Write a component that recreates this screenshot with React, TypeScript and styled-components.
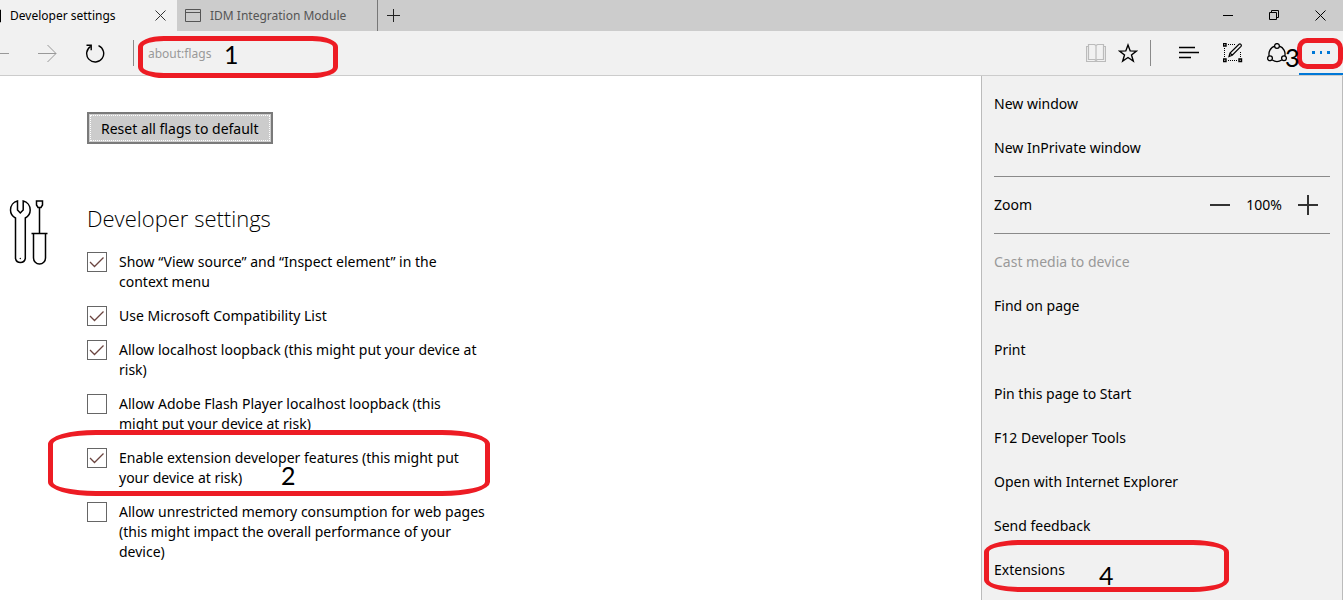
import React from 'react';
import styled, { createGlobalStyle } from 'styled-components';

const GlobalStyle = createGlobalStyle`
  * { box-sizing: border-box; }
  body {
    margin: 0;
    background: #fff;
    color: #000;
    font: 14px/20px "Segoe UI", "Noto Sans", "Open Sans", sans-serif;
  }
  button, input { font: inherit; color: inherit; }
  svg { display: block; flex: none; }
`;

const Window = styled.div`
  min-height: 100vh;
  display: flex;
  flex-direction: column;
  overflow: hidden;
`;

const TitleBar = styled.header`
  display: flex;
  height: 31px;
  background: #ccc;
  font-size: 12px;
`;

const Tab = styled.div<{ $active?: boolean; $width: number }>`
  display: flex;
  align-items: center;
  gap: 8px;
  width: ${p => p.$width}px;
  padding-right: ${p => (p.$active ? 11 : 8)}px;
  padding-left: ${p => (p.$active ? 0 : 8)}px;
  background: ${p => (p.$active ? '#f1f1f1' : '#ccc')};
  color: ${p => (p.$active ? '#000' : '#555')};
  border-right: ${p => (p.$active ? 'none' : '1px solid #777')};
  white-space: nowrap;
`;

const TabTitle = styled.span`
  flex: 1;
`;

const IconButton = styled.button<{ $width?: number }>`
  display: flex;
  align-items: center;
  justify-content: center;
  flex: none;
  width: ${p => (p.$width ? p.$width + 'px' : 'auto')};
  align-self: stretch;
  padding: 0;
  border: 0;
  background: none;
`;

const WindowControls = styled.div`
  display: flex;
  margin-left: auto;
`;

const Toolbar = styled.nav`
  display: flex;
  align-items: center;
  height: 45px;
  background: #f1f1f1;
  border-bottom: 1px solid #ccc;
`;

const Navigation = styled.div`
  display: flex;
  align-self: stretch;
  gap: 28px;
  margin-right: 28px;
`;

const Divider = styled.span`
  width: 1px;
  height: 26px;
  background: #8a8a8a;
`;

const AddressBar = styled.div`
  position: relative;
  flex: 1;
  display: flex;
  align-items: center;
  align-self: stretch;
`;

const AddressInput = styled.input`
  width: 100%;
  padding: 2px 14px 0;
  border: 0;
  outline: 0;
  background: none;
  color: #999;
  font-size: 12px;
`;

const PageTools = styled.div`
  display: flex;
  align-items: center;
  align-self: stretch;
  margin-right: 6px;
`;

const BrowserTools = styled.div`
  display: flex;
  align-self: stretch;
  margin-left: 16px;
`;

const MoreTool = styled.div`
  position: relative;
  display: flex;
  border-bottom: 2px solid #0078d7;
`;

const Callout = styled.span<{ $inset: string; $radius: string }>`
  position: absolute;
  inset: ${p => p.$inset};
  z-index: 2;
  border: 5px solid #ed1c24;
  border-radius: ${p => p.$radius};
  pointer-events: none;
`;

const AddressCallout = styled(Callout)`
  width: 200px;
`;

const CalloutNumber = styled.span<{ $left: number; $top: number }>`
  position: absolute;
  left: ${p => p.$left}px;
  top: ${p => p.$top}px;
  z-index: 3;
  color: #000;
  font: 25px/24px Lato, sans-serif;
  pointer-events: none;
`;

const Body = styled.div`
  flex: 1;
  display: flex;
`;

const Page = styled.main`
  flex: 1;
  padding-top: 36px;
`;

const Section = styled.section`
  display: grid;
  grid-template-columns: 78px 1fr;
  padding-left: 9px;
  margin-bottom: 56px;
`;

const SectionContent = styled.div`
  grid-column: 2;
`;

const ResetButton = styled.button`
  height: 32px;
  padding: 1px 12px 0;
  border: 2px solid #7a7a7a;
  background: #ccc;
  outline: 1px dotted #fff;
  outline-offset: -4px;
  white-space: nowrap;
`;

const Heading = styled.h1`
  margin: 0 0 16px;
  font-size: 22px;
  line-height: 36px;
  font-weight: 300;
  font-family: "Open Sans", "Noto Sans", sans-serif;
`;

const FlagList = styled.ul`
  display: flex;
  flex-direction: column;
  gap: 14px;
  margin: 0;
  padding: 0;
  list-style: none;
`;

const FlagItem = styled.li`
  position: relative;
  max-width: 402px;
`;

const FlagLabel = styled.label`
  display: flex;
  gap: 12px;
`;

const CheckSlot = styled.span`
  display: grid;
  flex: none;
  width: 20px;
  height: 20px;
  > * { grid-area: 1 / 1; }
  > svg { pointer-events: none; visibility: hidden; }
  > input:checked + svg { visibility: visible; }
`;

const Checkbox = styled.input`
  appearance: none;
  width: 20px;
  height: 20px;
  margin: 0;
  border: 1px solid #666;
  background: #fff;
`;

const Menu = styled.aside`
  flex: none;
  width: 362px;
  padding: 6px 12px 0;
  background: #f1f1f1;
  border: solid #bbb;
  border-width: 0 1px;
`;

const MenuEntry = styled.div`
  position: relative;
`;

const MenuItem = styled.button`
  display: block;
  width: 100%;
  height: 44px;
  padding: 0;
  border: 0;
  background: none;
  text-align: left;
  &:disabled { color: #999; }
`;

const Separator = styled.hr`
  height: 1px;
  margin: 6px 0;
  border: 0;
  background: #8a8a8a;
`;

const ZoomRow = styled.div`
  display: flex;
  align-items: center;
  height: 44px;
`;

const ZoomControls = styled.div`
  display: flex;
  align-items: center;
  align-self: stretch;
  margin-left: auto;
`;

const ZoomValue = styled.output`
  width: 44px;
  text-align: center;
`;

type GlyphProps = { w?: number; h?: number; color?: string; sw?: number; children: React.ReactNode };

const Glyph = ({ w = 20, h = 20, color = '#000', sw = 1, children }: GlyphProps) => (
  <svg width={w} height={h} viewBox={`0 0 ${w} ${h}`} fill="none" stroke={color} strokeWidth={sw} aria-hidden="true">
    {children}
  </svg>
);

const flags = [
  { text: 'Show “View source” and “Inspect element” in the context menu', on: true },
  { text: 'Use Microsoft Compatibility List', on: true },
  { text: 'Allow localhost loopback (this might put your device at risk)', on: true },
  { text: 'Allow Adobe Flash Player localhost loopback (this might\u00a0put your device at risk)', on: false },
  { text: 'Enable extension developer features (this might put your device at risk)', on: true, callout: true },
  { text: 'Allow unrestricted memory consumption for web pages (this might impact the overall performance of your device)', on: false },
];

const pageActions = [
  'Find on page',
  'Print',
  'Pin this page to Start',
  'F12 Developer Tools',
  'Open with Internet Explorer',
  'Send feedback',
];

export default function App() {
  return (
    <Window>
      <GlobalStyle />
      <TitleBar>
        <Tab $active $width={177}>
          <Glyph w={2} h={14}><path d="M0 1h.5v12H0" /></Glyph>
          <TabTitle>Developer settings</TabTitle>
          <IconButton aria-label="Close tab">
            <Glyph w={11} h={11} color="#333"><path d="M.5.5l10 10M10.5.5l-10 10" /></Glyph>
          </IconButton>
        </Tab>
        <Tab $width={201}>
          <Glyph w={17} h={14} color="#555"><path d="M.5.5h15v12H.5zM.5 3.5h15" /></Glyph>
          <TabTitle>IDM Integration Module</TabTitle>
        </Tab>
        <IconButton $width={31} aria-label="New tab">
          <Glyph w={13} h={13} color="#222"><path d="M6.5 0v13M0 6.5h13" /></Glyph>
        </IconButton>
        <WindowControls>
          <IconButton $width={46} aria-label="Minimize">
            <Glyph w={10} h={11}><path d="M0 5.5h10" /></Glyph>
          </IconButton>
          <IconButton $width={46} aria-label="Restore">
            <Glyph w={11} h={11}><path d="M.5 2.5h7v7h-7zM2.5 2.5v-2h7v7h-2" /></Glyph>
          </IconButton>
          <IconButton $width={46} aria-label="Close">
            <Glyph w={11} h={11}><path d="M.5.5l10 10M10.5.5l-10 10" /></Glyph>
          </IconButton>
        </WindowControls>
      </TitleBar>

      <Toolbar>
        <Navigation>
          <IconButton aria-label="Back">
            <Glyph w={9} color="#999"><path d="M0 10.5h9" /></Glyph>
          </IconButton>
          <IconButton aria-label="Forward">
            <Glyph color="#999"><path d="M1 10.5h18M10.5 2l8.500 8.500-8.500 8.500" /></Glyph>
          </IconButton>
          <IconButton aria-label="Refresh">
            <Glyph sw={1.4}>
              <path d="M5.700 3.300a8.500 8.500 0 1 0 7.800-.6" />
              <path d="M1.500 2.200h4.700v5" />
            </Glyph>
          </IconButton>
        </Navigation>
        <Divider />
        <AddressBar>
          <AddressInput aria-label="Address" defaultValue="about:flags" />
          <AddressCallout $inset="5px auto -3px 4px" $radius="26px / 11px" />
          <CalloutNumber $left={90} $top={11}>1</CalloutNumber>
        </AddressBar>
        <PageTools>
          <IconButton $width={32} aria-label="Reading view">
            <Glyph color="#bbb" sw={1.2}>
              <path d="M2.500 1.500h6l1.500 1 1.500-1h6v15h-6l-1.500 1-1.500-1h-6zM10 2.500v15M2.500 3.500h-2v15h19v-15h-2" />
            </Glyph>
          </IconButton>
          <IconButton $width={32} aria-label="Add to favorites">
            <Glyph sw={1.4}>
              <path d="M10 2l2.200 5.900 6.300.2-5 3.900 1.800 6-5.300-3.500L4.700 18l1.800-6-5-3.900 6.300-.2z" />
            </Glyph>
          </IconButton>
        </PageTools>
        <Divider />
        <BrowserTools>
          <IconButton $width={44} aria-label="Hub">
            <Glyph sw={1.3}><path d="M0 4.500h16M0 9.500h20M0 14.500h12" /></Glyph>
          </IconButton>
          <IconButton $width={44} aria-label="Make a web note">
            <Glyph>
              <path d="M5 1.500h7M1.500 5v10M5 17.500h10M17.500 9v6" strokeDasharray="1 1" />
              <path d="M.5.5h2.500v2.500H.5zM.5 16h2.500v2.500H.5zM16 16h2.500v2.500H16z" strokeWidth={1.4} />
              <path d="M6 13.500l1-3.500 9-8.700c1.300-1 3 .6 2 2L9.200 12.200zM7 10l2.200 2.200" strokeWidth={1.2} />
            </Glyph>
          </IconButton>
          <IconButton $width={44} aria-label="Share">
            <Glyph sw={1.3}>
              <path d="M7.500 3.200A8.300 8.300 0 0 0 2.200 13M12.500 3.200A8.300 8.300 0 0 1 17.800 13M5.300 17a8.300 8.300 0 0 0 9.400 0" />
              <circle cx="10" cy="3" r="2.400" />
              <circle cx="3" cy="15.300" r="2.400" />
              <circle cx="17" cy="15.300" r="2.400" />
            </Glyph>
          </IconButton>
          <MoreTool>
            <IconButton $width={44} aria-label="More">
              <Glyph w={18} h={4} color="none">
                <path fill="#0078d7" d="M0 1h3v3H0zM8 1h2v3H8zM15 1h3v3h-3z" />
              </Glyph>
            </IconButton>
            <Callout $inset="7px 0 4px -2px" $radius="10px" />
            <CalloutNumber $left={-14} $top={14}>3</CalloutNumber>
          </MoreTool>
        </BrowserTools>
      </Toolbar>

      <Body>
        <Page>
          <Section>
            <SectionContent>
              <ResetButton>Reset all flags to default</ResetButton>
            </SectionContent>
          </Section>
          <Section>
            <Glyph w={40} h={66} sw={1.5}>
              <path d="M8.500 1v9l2.800 3 2.900-3V1c4 1 7 4.500 7 9 0 3.500-2 6.500-4.900 8v40.500a5 5 0 0 1-9.800 0V18c-3-1.500-5-4.500-5-8 0-4.500 3-8 7-9z" />
              <path d="M27.500 1h6v4l-1.500 2.500h-3L27.500 5zM30.500 7.500v26M22.500 33.500h16M24.500 34v24a6 6 0 0 0 12 0V34" />
              <circle cx="11.300" cy="58.500" r=".7" fill="#000" stroke="none" />
            </Glyph>
            <SectionContent>
              <Heading>Developer settings</Heading>
              <FlagList>
                {flags.map(flag => (
                  <FlagItem key={flag.text}>
                    <FlagLabel>
                      <CheckSlot>
                        <Checkbox type="checkbox" defaultChecked={flag.on} />
                        <Glyph color="#6b4540" sw={1.3}><path d="M3 10l4.500 4.500L16.500 5.500" /></Glyph>
                      </CheckSlot>
                      <span>{flag.text}</span>
                    </FlagLabel>
                    {flag.callout && (
                      <>
                        <Callout $inset="-18px -1px -8px -39px" $radius="48px / 14px" />
                        <CalloutNumber $left={194} $top={15}>2</CalloutNumber>
                      </>
                    )}
                  </FlagItem>
                ))}
              </FlagList>
            </SectionContent>
          </Section>
        </Page>

        <Menu>
          <MenuItem>New window</MenuItem>
          <MenuItem>New InPrivate window</MenuItem>
          <Separator />
          <ZoomRow>
            <span>Zoom</span>
            <ZoomControls>
              <IconButton $width={44} aria-label="Zoom out">
                <Glyph color="#333" sw={2}><path d="M0 10h20" /></Glyph>
              </IconButton>
              <ZoomValue>100%</ZoomValue>
              <IconButton $width={44} aria-label="Zoom in">
                <Glyph color="#333" sw={2}><path d="M0 10h20M10 0v20" /></Glyph>
              </IconButton>
            </ZoomControls>
          </ZoomRow>
          <Separator />
          <MenuItem disabled>Cast media to device</MenuItem>
          {pageActions.map(action => (
            <MenuItem key={action}>{action}</MenuItem>
          ))}
          <MenuEntry>
            <MenuItem>Extensions</MenuItem>
            <Callout $inset="-8px 101px 0 -10px" $radius="36px / 12px" />
            <CalloutNumber $left={105} $top={15}>4</CalloutNumber>
          </MenuEntry>
        </Menu>
      </Body>
    </Window>
  );
}
